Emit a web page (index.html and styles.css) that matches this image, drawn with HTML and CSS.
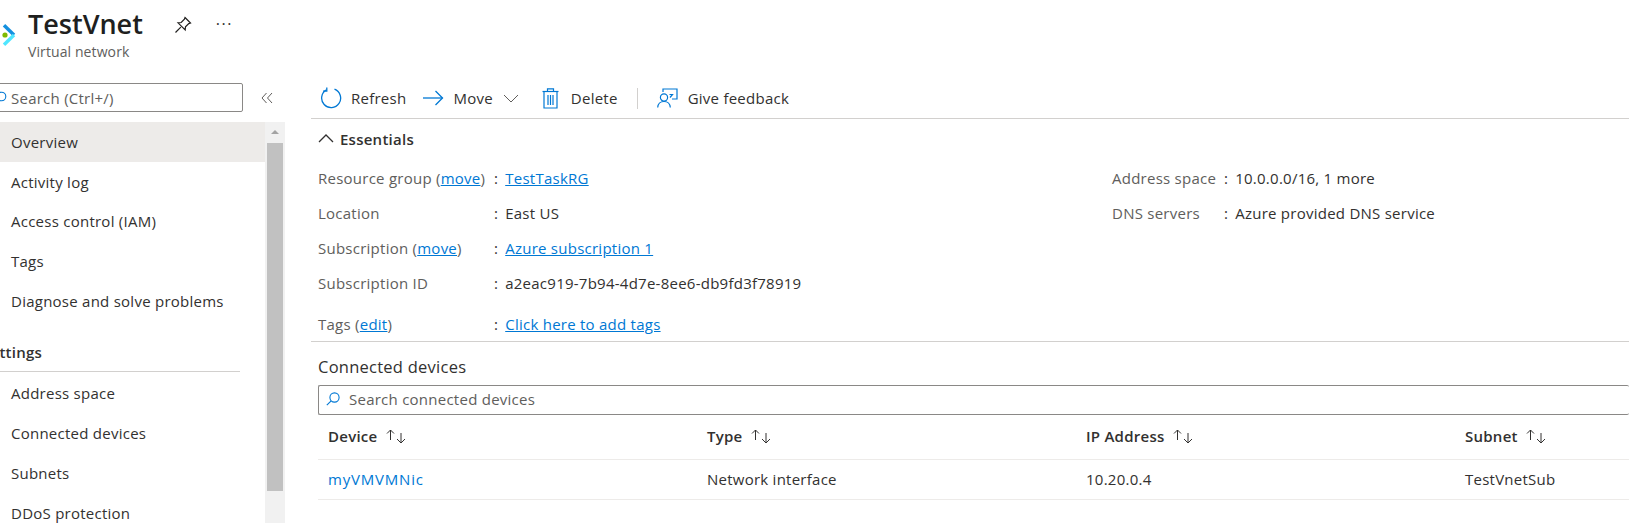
FILE: index.html
```html
<!DOCTYPE html>
<html lang="en">
  <head>
    <meta charset="UTF-8" />
    <title>TestVnet</title>
    <link rel="stylesheet" href="styles.css">
  </head>

  <body>
    <header class="blade-header">
      <svg class="logo" width="17" height="22" viewBox="0 0 17 22" fill="none" stroke-width="3.4">
        <circle cx="5" cy="11" r="2.6" fill="#7fba00" />
        <path d="M4 1.2 L14 11" stroke="#1490df" />
        <path d="M14 11 L4 20.8" stroke="#50e6ff" />
      </svg>
      <div class="title-block">
        <h1>TestVnet</h1>
        <p>Virtual network</p>
      </div>
      <svg class="pin" width="18" height="18" viewBox="0 0 18 18" fill="none" stroke="#201f1e" stroke-width="1.2">
        <path d="M11 1.5 L16.5 7 L14.8 7.6 L11.5 10.8 L11.2 14 L4 6.8 L7.2 6.5 L10.4 3.2 Z" />
        <path d="M6.8 11.2 L1.5 16.5" />
      </svg>
      <span class="more">···</span>
    </header>

    <div class="blade">
      <aside class="sidebar">
        <div class="side-top">
          <div class="side-search">
            <svg class="side-search-icon" width="14" height="14" viewBox="0 0 14 14" fill="none" stroke="#0078d4" stroke-width="1.1">
              <circle cx="8.5" cy="5.5" r="4.3" />
              <path d="M5.3 8.7 L0.8 13.2" />
            </svg>
            <span>Search (Ctrl+/)</span>
          </div>
          <span class="collapse">
            <svg width="12" height="12" viewBox="0 0 12 12" fill="none" stroke="#605e5c" stroke-width="1">
              <path d="M5.5 1 L1 6 L5.5 11" />
              <path d="M11 1 L6.5 6 L11 11" />
            </svg>
          </span>
        </div>
        <div class="side-scroll">
          <nav class="side-menu">
            <a class="active" href="#">Overview</a>
            <a href="#">Activity log</a>
            <a href="#">Access control (IAM)</a>
            <a href="#">Tags</a>
            <a href="#">Diagnose and solve problems</a>
            <h2>Settings</h2>
            <a href="#">Address space</a>
            <a href="#">Connected devices</a>
            <a href="#">Subnets</a>
            <a href="#">DDoS protection</a>
          </nav>
          <div class="scrollbar">
            <span class="scroll-up"></span>
            <span class="scroll-thumb"></span>
          </div>
        </div>
      </aside>

      <main class="content">
        <div class="toolbar">
          <button class="tool tool-refresh">
            <svg width="22" height="22" viewBox="0 0 22 22" fill="none" stroke="#0078d4" stroke-width="1.3">
              <path d="M6.5 2.8 A9.5 9.5 0 1 0 14.5 2.2" />
              <path d="M6.8 0.5 L6.8 4.2 L3 4.2" />
            </svg>
            Refresh
          </button>
          <button class="tool tool-move">
            <svg width="22" height="16" viewBox="0 0 22 16" fill="none" stroke="#0078d4" stroke-width="1.3">
              <path d="M1 8 H20.5" />
              <path d="M13.5 1 L20.5 8 L13.5 15" />
            </svg>
            Move
            <svg class="caret" width="16" height="9" viewBox="0 0 16 9" fill="none" stroke="#605e5c" stroke-width="1">
              <path d="M1 1 L8 8 L15 1" />
            </svg>
          </button>
          <button class="tool tool-delete">
            <svg width="17" height="21" viewBox="0 0 17 21" fill="none" stroke="#0078d4" stroke-width="1.2">
              <path d="M0.5 3.5 H16.5" />
              <path d="M5.5 3.5 V0.8 H11.5 V3.5" />
              <path d="M2 3.5 V20 H15 V3.5" />
              <path d="M6 7 V17 M8.5 7 V17 M11 7 V17" />
            </svg>
            Delete
          </button>
          <span class="tool-sep"></span>
          <button class="tool tool-feedback">
            <svg width="21" height="20" viewBox="0 0 21 20" fill="none" stroke="#0078d4" stroke-width="1.2">
              <path d="M6 4 V1 H20 V11 H15" />
              <path d="M12.5 6.5 L15.5 6.5 L13 9.5" />
              <circle cx="7" cy="9.5" r="3.6" />
              <path d="M0.7 19.5 C1 15.5 3.5 13.5 7 13.5 C10.5 13.5 13 15.5 13.3 19.5" />
            </svg>
            Give feedback
          </button>
        </div>

        <h3 class="essentials-head">
          <svg width="16" height="9" viewBox="0 0 16 9" fill="none" stroke="#323130" stroke-width="1.3">
            <path d="M1 8 L8 1 L15 8" />
          </svg>
          Essentials
        </h3>

        <section class="essentials">
          <dl class="props props-left">
            <dt>Resource group (<a href="#">move</a>)</dt>
            <dd><a href="#">TestTaskRG</a></dd>
            <dt>Location</dt>
            <dd>East US</dd>
            <dt>Subscription (<a href="#">move</a>)</dt>
            <dd><a href="#">Azure subscription 1</a></dd>
            <dt>Subscription ID</dt>
            <dd>a2eac919-7b94-4d7e-8ee6-db9fd3f78919</dd>
            <dt class="tags-row">Tags (<a href="#">edit</a>)</dt>
            <dd class="tags-row"><a href="#">Click here to add tags</a></dd>
          </dl>
          <dl class="props props-right">
            <dt>Address space</dt>
            <dd>10.0.0.0/16, 1 more</dd>
            <dt>DNS servers</dt>
            <dd>Azure provided DNS service</dd>
          </dl>
        </section>

        <section class="devices">
          <h2>Connected devices</h2>
          <div class="device-search">
            <svg width="14" height="14" viewBox="0 0 14 14" fill="none" stroke="#0078d4" stroke-width="1.1">
              <circle cx="8.5" cy="5.5" r="4.6" />
              <path d="M5.2 8.8 L0.8 13.2" />
            </svg>
            <span>Search connected devices</span>
          </div>
          <div class="grid-row grid-head">
            <div>Device
              <svg class="sort" width="21" height="15" viewBox="0 0 21 15" fill="none" stroke="#323130" stroke-width="1">
                <path d="M4.5 11 V1 M1 4.5 L4.5 1 L8 4.5" />
                <path d="M15 4 V14 M11 10 L15 14 L19 10" />
              </svg>
            </div>
            <div>Type
              <svg class="sort" width="21" height="15" viewBox="0 0 21 15" fill="none" stroke="#323130" stroke-width="1">
                <path d="M4.5 11 V1 M1 4.5 L4.5 1 L8 4.5" />
                <path d="M15 4 V14 M11 10 L15 14 L19 10" />
              </svg>
            </div>
            <div>IP Address
              <svg class="sort" width="21" height="15" viewBox="0 0 21 15" fill="none" stroke="#323130" stroke-width="1">
                <path d="M4.5 11 V1 M1 4.5 L4.5 1 L8 4.5" />
                <path d="M15 4 V14 M11 10 L15 14 L19 10" />
              </svg>
            </div>
            <div>Subnet
              <svg class="sort" width="21" height="15" viewBox="0 0 21 15" fill="none" stroke="#323130" stroke-width="1">
                <path d="M4.5 11 V1 M1 4.5 L4.5 1 L8 4.5" />
                <path d="M15 4 V14 M11 10 L15 14 L19 10" />
              </svg>
            </div>
          </div>
          <div class="grid-row">
            <div><a href="#">myVMVMNic</a></div>
            <div>Network interface</div>
            <div>10.20.0.4</div>
            <div>TestVnetSub</div>
          </div>
        </section>
      </main>
    </div>
  </body>
</html>
```

FILE: styles.css
```css
* {
  margin: 0;
  padding: 0;
  box-sizing: border-box;
}

html,
body {
  width: 1629px;
  height: 523px;
  overflow: hidden;
}

body {
  font-family: "Open Sans", "Noto Sans", sans-serif;
  font-size: 15px;
  letter-spacing: 0.25px;
  color: #323130;
  background: white;
}

a {
  color: #0078d4;
}

/* header */
.blade-header {
  height: 78px;
  display: flex;
  align-items: flex-start;
  position: relative;
}

.logo {
  margin-top: 24px;
  margin-right: 11px;
  flex: none;
}

.title-block h1 {
  font-size: 27px;
  font-weight: 600;
  letter-spacing: 0;
  line-height: 36px;
  margin-top: 6px;
  color: #201f1e;
}

.title-block p {
  font-size: 14px;
  line-height: 18px;
  letter-spacing: 0.1px;
  color: #605e5c;
  margin-top: 1px;
}

.pin {
  margin-top: 16px;
  margin-left: 31px;
}

.more {
  margin-top: 13px;
  margin-left: 24px;
  font-size: 16px;
  letter-spacing: 1.5px;
  color: #323130;
}

/* layout */
.blade {
  display: flex;
}

.sidebar {
  width: 285px;
  flex: none;
}

.side-top {
  display: flex;
  align-items: center;
  height: 44px;
  padding-top: 5px;
  padding-bottom: 10px;
}

.side-search {
  width: 245px;
  height: 29px;
  margin-left: -2px;
  border: 1px solid #8a8886;
  border-radius: 2px;
  display: flex;
  align-items: center;
  color: #605e5c;
  position: relative;
  padding-left: 12px;
}

.side-search-icon {
  position: absolute;
  left: -6px;
  top: 7px;
}

.collapse {
  margin-left: 18px;
  display: flex;
}

.side-scroll {
  display: flex;
}

.side-menu {
  width: 265px;
  flex: none;
}

.side-menu a {
  display: block;
  height: 39.7px;
  line-height: 40px;
  padding-left: 11px;
  color: #323130;
  text-decoration: none;
}

.side-menu a.active {
  background: #edebe9;
}

.side-menu h2 {
  font-size: 15px;
  font-weight: 600;
  height: 34px;
  line-height: 28px;
  margin: 18px 25px 1px -18px;
  border-bottom: 1px solid #d2d0ce;
  width: 258px;
}

.scrollbar {
  width: 20px;
  background: #f1f1f1;
  padding: 0 2px;
  height: 401px;
}

.scroll-up {
  display: block;
  height: 21px;
  position: relative;
}

.scroll-up::before {
  content: "";
  position: absolute;
  left: 4px;
  top: 8px;
  border-left: 4px solid transparent;
  border-right: 4px solid transparent;
  border-bottom: 4px solid #a3a3a3;
}

.scroll-thumb {
  display: block;
  height: 348px;
  background: #c1c1c1;
}

.content {
  flex: 1;
  padding-left: 26px;
  min-width: 0;
}

/* toolbar */
.toolbar {
  display: flex;
  align-items: center;
  height: 41px;
  border-bottom: 1px solid #d2d0ce;
  padding-left: 9px;
}

.tool {
  display: flex;
  align-items: center;
  gap: 10px;
  border: none;
  background: none;
  font: inherit;
  letter-spacing: inherit;
  color: #323130;
}

.tool-refresh {
  gap: 9px;
}

.tool-move {
  margin-left: 16px;
  gap: 9px;
}

.tool-move .caret {
  margin-left: 1px;
}

.tool-delete {
  margin-left: 23px;
  gap: 12px;
}

.tool-sep {
  width: 1px;
  height: 21px;
  background: #d2d0ce;
  margin: 0 19px;
}

.tool-feedback {
  gap: 10px;
}

/* essentials */
.essentials-head {
  display: flex;
  align-items: center;
  gap: 6px;
  font-size: 15px;
  font-weight: 600;
  height: 39px;
  padding-left: 7px;
}

.essentials {
  display: flex;
  padding-left: 7px;
  padding-top: 3px;
  height: 184px;
  border-bottom: 1px solid #d2d0ce;
}

.props {
  display: grid;
  align-content: start;
  grid-auto-rows: 34.8px;
  align-items: center;
}

.props-left {
  width: 794px;
  grid-template-columns: 176px 1fr;
}

.props-right {
  grid-template-columns: 112px 1fr;
}

.props dt {
  color: #605e5c;
}

.props dd::before {
  content: ":";
  margin-right: 7px;
  color: #323130;
}

.props .tags-row {
  margin-top: 12px;
  height: 34px;
  line-height: 34px;
}

/* connected devices */
.devices {
  padding-left: 7px;
}

.devices h2 {
  font-size: 16.5px;
  font-weight: 400;
  line-height: 22px;
  margin-top: 14px;
  margin-bottom: 7px;
}

.device-search {
  height: 30px;
  border: 1px solid #8a8886;
  border-radius: 2px;
  border-right: none;
  display: flex;
  align-items: center;
  gap: 9px;
  padding-left: 7px;
  padding-bottom: 3px;
  color: #605e5c;
}

.grid-row {
  display: grid;
  grid-template-columns: repeat(4, 379px);
  height: 40px;
  align-items: center;
  border-bottom: 1px solid #edebe9;
  padding-bottom: 2px;
}

.grid-row > div {
  padding-left: 10px;
}

.grid-row a {
  text-decoration: none;
  letter-spacing: 0.8px;
}

.grid-head {
  height: 45px;
  font-weight: 600;
}

.sort {
  margin-left: 4px;
  vertical-align: -2px;
}
```
